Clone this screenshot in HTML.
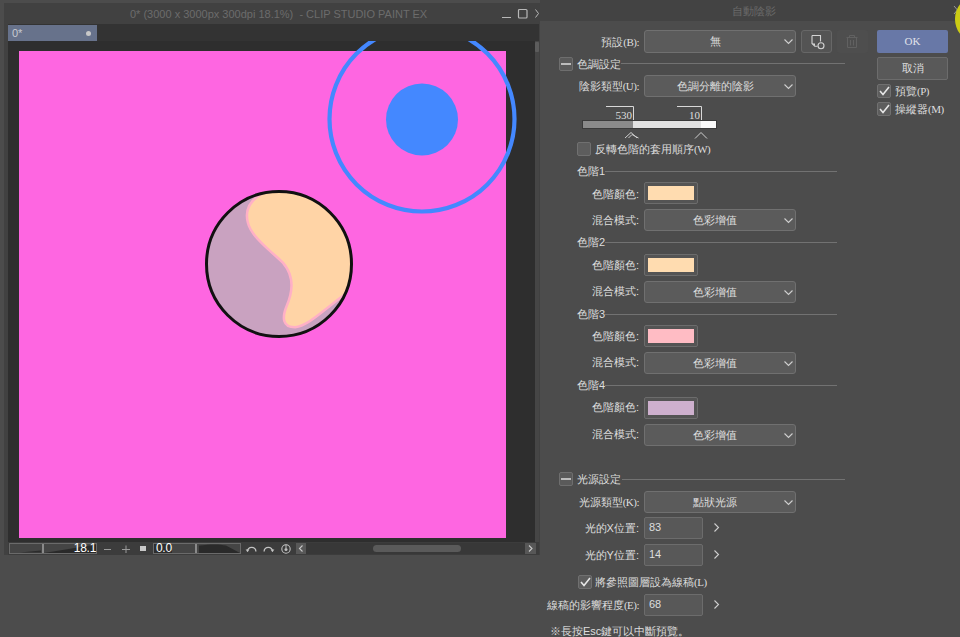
<!DOCTYPE html>
<html><head><meta charset="utf-8">
<style>
*{box-sizing:border-box;margin:0;padding:0}
html,body{width:960px;height:637px;overflow:hidden}
body{position:relative;background:#4c4c4c;font-family:"Liberation Sans",sans-serif;color:#dedede;font-size:11px}
.a{position:absolute}
svg{position:absolute;overflow:visible}
/* left app */
#ltitle{left:4px;top:3px;width:536px;height:552px;background:#414141}
#ttl{left:130px;top:7px;font-size:11px;line-height:14px;color:#6c6c6c;white-space:nowrap}
#tabrow{left:8px;top:24px;width:531px;height:17px;background:#333}
#tab{left:8px;top:25px;width:89px;height:16px;background:#67728b}
#canvasbg{left:8px;top:41px;width:527px;height:502px;background:#2e2e2e;overflow:hidden}
#vscroll{left:535px;top:41px;width:4px;height:502px;background:#464646}
#pink{left:11px;top:10px;width:487px;height:487px;background:#fe66e1}
#status{left:8px;top:542px;width:531px;height:13px;background:#3c3c3c}
/* dialog */
#dtitle{left:540px;top:0;width:420px;height:21px;background:#434343}
.lbl{position:absolute;white-space:nowrap;text-align:right;line-height:14px;right:321px}
.t{position:absolute;white-space:nowrap;line-height:14px}
.dd{position:absolute;left:644px;width:152px;height:22px;background:#5b5b5b;border:1px solid #707070;border-radius:3px;text-align:center;line-height:20px;padding-right:10px}
.dd svg{right:2px;top:8px}
.sw{position:absolute;left:644px;width:54px;height:22px;background:#545454;border:1px solid #6c6c6c;border-radius:2px}
.sw i{position:absolute;left:3px;top:3px;width:46px;height:14px}
.hr{position:absolute;height:1px;background:#727272}
.n{font-weight:normal;font-family:"Liberation Serif",serif;letter-spacing:-0.5px}
.cb{position:absolute;width:14px;height:14px;background:#5d5d5d;border:1px solid #707070;border-radius:2px}
.mb{position:absolute;left:559px;width:14px;height:14px;background:#5a5a5a;border:1px solid #6e6e6e;border-radius:2px}
.mb i{position:absolute;left:1px;top:5px;width:10px;height:2px;background:#bcbcbc}
.inp{position:absolute;left:644px;width:59px;height:22px;background:#585858;border:1px solid #6c6c6c;border-radius:2px;padding-left:4px;line-height:18px}
</style></head><body>
<div class="a" id="ltitle"></div>
<div class="a" id="ttl">0* (3000 x 3000px 300dpi 18.1%)&nbsp; - CLIP STUDIO PAINT EX</div>
<svg style="left:500px;top:8px" width="40" height="12" viewBox="0 0 40 12">
 <path d="M2 9.5H11" stroke="#b8b8b8" stroke-width="1"/>
 <rect x="18.5" y="1.5" width="8.5" height="8.5" rx="1" fill="none" stroke="#b8b8b8" stroke-width="1.2"/>
 <path d="M35.5 1.5L38.5 5.5L35.5 9.5" fill="none" stroke="#b8b8b8" stroke-width="1"/>
</svg>
<div class="a" id="tabrow"></div>
<div class="a" id="tab"></div>
<div class="a" style="left:12px;top:26px;color:#c8cad0;font-size:11px;line-height:14px">0*</div>
<div class="a" style="left:86px;top:31px;width:5px;height:5px;border-radius:50%;background:#c8c8c8"></div>
<div class="a" id="canvasbg">
 <div class="a" id="pink"></div>
 <svg style="left:0;top:0" width="527" height="502" viewBox="8 41 527 502">
  <defs><clipPath id="ball"><circle cx="279" cy="264" r="72.5"/></clipPath></defs>
  <circle cx="422" cy="119" r="92.5" fill="none" stroke="#4488ff" stroke-width="4.2"/>
  <circle cx="422" cy="119.5" r="36" fill="#4488ff"/>
  <g clip-path="url(#ball)">
   <rect x="200" y="185" width="160" height="160" fill="#c9a2c0"/>
   <path d="M282 187 C256 194,245 206,249 222 C252 236,272 250,284 262 C296 276,294 292,288 306 C283 318,284 326,295 326 C310 324,325 306,352 288 L362 182 Z" fill="#ffd4a6" stroke="#ffb0c6" stroke-width="5"/>
   <path d="M282 187 C256 194,245 206,249 222 C252 236,272 250,284 262 C296 276,294 292,288 306 C283 318,284 326,295 326 C310 324,325 306,352 288 L362 182 Z" fill="#ffd4a6"/>
  </g>
  <circle cx="279" cy="264" r="72.5" fill="none" stroke="#111" stroke-width="3"/>
 </svg>
</div>
<div class="a" id="vscroll"></div>
<div class="a" style="left:535px;top:42px;width:4px;height:10px;background:#5c5c5c;border-radius:1px"></div>
<div class="a" id="status"></div>
<svg style="left:0;top:540px" width="540" height="18" viewBox="0 540 540 18">
 <rect x="9.5" y="543.5" width="87" height="10" fill="#454545" stroke="#6a6a6a" stroke-width="1"/>
 <path d="M20 552.5L41 550.5V552.5Z" fill="#2c2c2c"/>
 <path d="M44 553L96 544.5V553Z" fill="#2a2a2a"/>
 <rect x="42" y="544" width="2" height="9" fill="#8a8a8a"/>
 <path d="M104 549.5H111" stroke="#9a9a9a" stroke-width="1"/>
 <path d="M122 549.5H130 M126 545.5V553" stroke="#9a9a9a" stroke-width="1"/>
 <rect x="140" y="546" width="6" height="5" fill="#c8c8c8"/>
 <rect x="153.5" y="543.5" width="87" height="10" fill="#454545" stroke="#6a6a6a" stroke-width="1"/>
 <rect x="154" y="544" width="18" height="9" fill="#2e2e2e"/>
 <path d="M199 553V545.5C210 544,220 544,226 545.5L240 553Z" fill="#2a2a2a"/>
 <rect x="195" y="544" width="2" height="9" fill="#8a8a8a"/>
 <path d="M247.5 551.5A4.2 4.2 0 0 1 255.9 551.5" fill="none" stroke="#c4c4c4" stroke-width="1.3"/>
 <path d="M245.6 549.6L247.5 552L249.4 549.6Z" fill="#c4c4c4"/>
 <path d="M264.1 551.5A4.2 4.2 0 0 1 272.5 551.5" fill="none" stroke="#c4c4c4" stroke-width="1.3"/>
 <path d="M270.6 549.6L272.5 552L274.4 549.6Z" fill="#c4c4c4"/>
 <circle cx="286" cy="549" r="4.2" fill="none" stroke="#c0c0c0" stroke-width="1.1"/>
 <circle cx="286" cy="549.5" r="1.5" fill="#c0c0c0"/>
 <path d="M286 544.5V548" stroke="#c0c0c0" stroke-width="1"/>
 <rect x="296" y="543" width="10" height="11" fill="#585858"/>
 <path d="M302.5 545.5L299.5 548.5L302.5 551.5" fill="none" stroke="#c8c8c8" stroke-width="1.1"/>
 <rect x="306" y="543" width="219" height="11" fill="#383838"/>
 <rect x="373" y="545" width="88" height="7" rx="3.5" fill="#5a5a5a"/>
 <rect x="525" y="543" width="11" height="11" fill="#575757"/>
 <path d="M529 545.5L532 548.5L529 551.5" fill="none" stroke="#c8c8c8" stroke-width="1.1"/>
</svg>
<div class="t" style="left:60px;top:542px;width:36px;text-align:right;color:#fff;font-size:12px;line-height:13px;letter-spacing:-0.3px">18.1</div>
<div class="t" style="left:156px;top:542px;color:#fff;font-size:12px;line-height:13px;letter-spacing:-0.3px">0.0</div>

<!-- dialog -->
<div class="a" id="dtitle"></div>
<div class="t" style="left:732px;top:4px;color:#6a6a6a">自動陰影</div>

<div class="lbl" style="top:35px">預設<b class="n">(B):</b></div>
<div class="dd" style="top:30px;height:23px;line-height:21px">無<svg width="9" height="5" viewBox="0 0 9 5"><path d="M0.5 0.5L4.5 4.5L8.5 0.5" fill="none" stroke="#cfcfcf" stroke-width="1.1"/></svg></div>
<div class="a" style="left:801px;top:30px;width:31px;height:23px;background:#545454;border:1px solid #676767;border-radius:3px"></div>
<svg style="left:806px;top:32px" width="22" height="20" viewBox="806 32 22 20">
 <path d="M812 35.5H820.5V41.5 M812 35.5V43.5L814.8 46.3H817.5" fill="none" stroke="#d4d4d4" stroke-width="1.1"/>
 <path d="M812.3 43.5L815 46.2V43.5Z" fill="#d4d4d4"/>
 <circle cx="821" cy="45.8" r="3" fill="none" stroke="#d4d4d4" stroke-width="1.1"/>
</svg>
<div class="a" style="left:837px;top:30px;width:31px;height:23px;background:#4e4e4e;border-radius:3px"></div>
<svg style="left:840px;top:32px" width="24" height="20" viewBox="840 32 24 20">
 <path d="M846.5 37.5H857.5 M849.5 37V35.5H854.5V37 M847.5 38V47.5H856.5V38 M850.5 40V45.5 M853.5 40V45.5" fill="none" stroke="#616161" stroke-width="1"/>
</svg>

<div class="a" style="left:877px;top:30px;width:71px;height:23px;background:#6878a7;border-radius:2px;text-align:center;line-height:23px;font-family:'Liberation Serif',serif;font-size:11px;color:#e0e2ea">OK</div>
<div class="a" style="left:877px;top:57px;width:71px;height:23px;background:#595959;border:1px solid #6c6c6c;border-radius:2px;text-align:center;line-height:21px">取消</div>
<div class="cb" style="left:877px;top:84px"></div>
<svg style="left:879px;top:86px" width="11" height="10" viewBox="0 0 11 10"><path d="M1 5L4 8.5L10 1" fill="none" stroke="#e6e6e6" stroke-width="1.6"/></svg>
<div class="t" style="left:895px;top:84px">預覽<b class="n">(P)</b></div>
<div class="cb" style="left:877px;top:102px"></div>
<svg style="left:879px;top:104px" width="11" height="10" viewBox="0 0 11 10"><path d="M1 5L4 8.5L10 1" fill="none" stroke="#e6e6e6" stroke-width="1.6"/></svg>
<div class="t" style="left:895px;top:102px">操縱器<b class="n">(M)</b></div>

<div class="mb" style="top:57px"><i></i></div>
<div class="t" style="left:577px;top:57px">色調設定</div>
<div class="hr" style="left:621px;top:63px;width:224px"></div>

<div class="lbl" style="top:79px">陰影類型<b class="n">(U):</b></div>
<div class="dd" style="top:75px">色調分離的陰影<svg width="9" height="5" viewBox="0 0 9 5"><path d="M0.5 0.5L4.5 4.5L8.5 0.5" fill="none" stroke="#cfcfcf" stroke-width="1.1"/></svg></div>

<!-- slider -->
<svg style="left:580px;top:104px" width="140" height="36" viewBox="580 104 140 36">
 <path d="M606 106.5H633.5V121 M677 106.5H701.5V121" fill="none" stroke="#d8d8d8" stroke-width="1"/>
 <rect x="582.5" y="120.5" width="134" height="8" fill="none" stroke="#3a3a3a" stroke-width="1"/><rect x="583" y="121" width="50" height="7" fill="#8a8a8a"/>
 <rect x="633" y="121" width="68" height="7" fill="#e2e2e2"/>
 <rect x="701" y="121" width="15" height="7" fill="#fafafa"/>
 <path d="M625 138L631 132.5L637 138 M628.5 138L632 134.5L638.5 138" fill="none" stroke="#d0d0d0" stroke-width="1"/>
 <path d="M695 138.5L701 132.5L707 138.5" fill="none" stroke="#d0d0d0" stroke-width="1"/>
</svg>
<div class="t" style="left:600px;top:108px;width:32px;text-align:right;font-family:'Liberation Serif',serif">530</div>
<div class="t" style="left:668px;top:108px;width:32px;text-align:right;font-family:'Liberation Serif',serif">10</div>

<div class="cb" style="left:577px;top:142px"></div>
<div class="t" style="left:595px;top:142px">反轉色階的套用順序<b class="n">(W)</b></div>

<!-- levels -->
<div class="t" style="left:577px;top:164px">色階1</div>
<div class="hr" style="left:605px;top:171px;width:232px"></div>
<div class="lbl" style="top:187px">色階顏色:</div>
<div class="sw" style="top:182px"><i style="background:#ffdcb0"></i></div>
<div class="lbl" style="top:213px">混合模式:</div>
<div class="dd" style="top:209px">色彩增值<svg width="9" height="5" viewBox="0 0 9 5"><path d="M0.5 0.5L4.5 4.5L8.5 0.5" fill="none" stroke="#cfcfcf" stroke-width="1.1"/></svg></div>

<div class="t" style="left:577px;top:235px">色階2</div>
<div class="hr" style="left:605px;top:242px;width:232px"></div>
<div class="lbl" style="top:258px">色階顏色:</div>
<div class="sw" style="top:254px"><i style="background:#ffdcb0"></i></div>
<div class="lbl" style="top:284px">混合模式:</div>
<div class="dd" style="top:281px">色彩增值<svg width="9" height="5" viewBox="0 0 9 5"><path d="M0.5 0.5L4.5 4.5L8.5 0.5" fill="none" stroke="#cfcfcf" stroke-width="1.1"/></svg></div>

<div class="t" style="left:577px;top:307px">色階3</div>
<div class="hr" style="left:605px;top:314px;width:232px"></div>
<div class="lbl" style="top:329px">色階顏色:</div>
<div class="sw" style="top:325px"><i style="background:#ffbcc4"></i></div>
<div class="lbl" style="top:355px">混合模式:</div>
<div class="dd" style="top:352px">色彩增值<svg width="9" height="5" viewBox="0 0 9 5"><path d="M0.5 0.5L4.5 4.5L8.5 0.5" fill="none" stroke="#cfcfcf" stroke-width="1.1"/></svg></div>

<div class="t" style="left:577px;top:378px">色階4</div>
<div class="hr" style="left:605px;top:385px;width:232px"></div>
<div class="lbl" style="top:400px">色階顏色:</div>
<div class="sw" style="top:397px"><i style="background:#ceb0ce"></i></div>
<div class="lbl" style="top:427px">混合模式:</div>
<div class="dd" style="top:424px">色彩增值<svg width="9" height="5" viewBox="0 0 9 5"><path d="M0.5 0.5L4.5 4.5L8.5 0.5" fill="none" stroke="#cfcfcf" stroke-width="1.1"/></svg></div>

<!-- light source -->
<div class="mb" style="top:472px"><i></i></div>
<div class="t" style="left:577px;top:472px">光源設定</div>
<div class="hr" style="left:622px;top:479px;width:223px"></div>
<div class="lbl" style="top:495px">光源類型<b class="n">(K):</b></div>
<div class="dd" style="top:491px">點狀光源<svg width="9" height="5" viewBox="0 0 9 5"><path d="M0.5 0.5L4.5 4.5L8.5 0.5" fill="none" stroke="#cfcfcf" stroke-width="1.1"/></svg></div>
<div class="lbl" style="top:521px">光的X位置:</div>
<div class="inp" style="top:517px">83</div>
<svg style="left:714px;top:523px" width="5" height="9" viewBox="0 0 5 9"><path d="M0.5 0.5L4.5 4.5L0.5 8.5" fill="none" stroke="#cfcfcf" stroke-width="1.1"/></svg>
<div class="lbl" style="top:548px">光的Y位置:</div>
<div class="inp" style="top:544px">14</div>
<svg style="left:714px;top:550px" width="5" height="9" viewBox="0 0 5 9"><path d="M0.5 0.5L4.5 4.5L0.5 8.5" fill="none" stroke="#cfcfcf" stroke-width="1.1"/></svg>
<div class="cb" style="left:578px;top:575px"></div>
<svg style="left:580px;top:577px" width="11" height="10" viewBox="0 0 11 10"><path d="M1 5L4 8.5L10 1" fill="none" stroke="#e6e6e6" stroke-width="1.6"/></svg>
<div class="t" style="left:595px;top:575px">將參照圖層設為線稿<b class="n">(L)</b></div>
<div class="lbl" style="top:598px">線稿的影響程度<b class="n">(E):</b></div>
<div class="inp" style="top:594px">68</div>
<svg style="left:714px;top:600px" width="5" height="9" viewBox="0 0 5 9"><path d="M0.5 0.5L4.5 4.5L0.5 8.5" fill="none" stroke="#cfcfcf" stroke-width="1.1"/></svg>
<div class="t" style="left:550px;top:624px">※長按Esc鍵可以中斷預覽。</div>
<svg style="left:953px;top:5px" width="8" height="10" viewBox="0 0 8 10"><path d="M1 1L7 8 M1 9L7 2" stroke="#9a9a9a" stroke-width="1"/></svg>
<div class="a" style="left:955px;top:-2px;width:34px;height:42px;border-radius:50%;background:#cccc14"></div>
</body></html>
